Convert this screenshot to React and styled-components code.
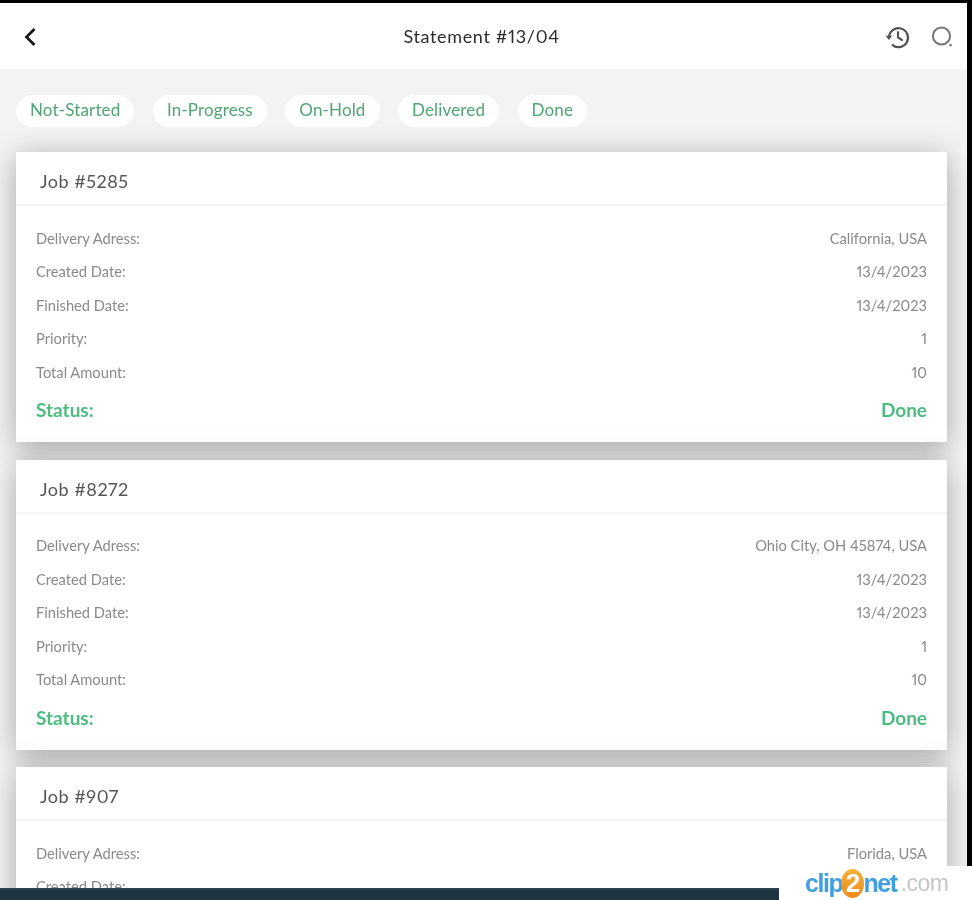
import React from "react";
import styled, { createGlobalStyle } from "styled-components";

const FILTERS = ["Not-Started", "In-Progress", "On-Hold", "Delivered", "Done"];

const fullDetails = (address) => [
    ["Delivery Adress:", address],
    ["Created Date:", "13/4/2023"],
    ["Finished Date:", "13/4/2023"],
    ["Priority:", "1"],
    ["Total Amount:", "10"],
];

// the last card runs off the bottom of the capture, only two rows of it show
const JOBS = [
    { id: 5285, details: fullDetails("California, USA"), status: "Done" },
    { id: 8272, details: fullDetails("Ohio City, OH 45874, USA"), status: "Done" },
    {
        id: 907,
        details: [
            ["Delivery Adress:", "Florida, USA"],
            ["Created Date:", ""],
        ],
    },
];

const GlobalStyle = createGlobalStyle`
    html, body {
        margin: 0;
        height: 900px;
        overflow: hidden;
        background: #000;
    }

    body {
        font-family: "Lato", "Noto Sans", sans-serif;
        font-variant-numeric: proportional-nums;
    }
`;

const Screen = styled.div`
    box-sizing: border-box;
    width: 967px;
    height: 885px;
    margin-top: 3px;
    overflow: hidden;
    background: #f3f3f3;
    filter: blur(0.6px);
`;

const Header = styled.header`
    box-sizing: border-box;
    height: 66px;
    display: flex;
    align-items: center;
    justify-content: space-between;
    padding: 2px 11px 0 16px;
    background: #fff;
`;

const IconButton = styled.div`
    width: 28px;
    height: 28px;
    display: flex;
`;

const Title = styled.h1`
    flex: 1;
    margin: 0 0 2px;
    padding-left: 36px;
    text-align: center;
    font-size: 18px;
    font-weight: 400;
    letter-spacing: 0.65px;
    color: #2c2c2c;
`;

const Actions = styled.div`
    display: flex;
    gap: 17px;
`;

const Filters = styled.div`
    display: flex;
    gap: 18.5px;
    padding: 26px 0 25px 16px;
`;

const Chip = styled.div`
    box-sizing: border-box;
    height: 32px;
    display: flex;
    align-items: center;
    padding: 0 14px 3px;
    border-radius: 16px;
    background: #fff;
    font-size: 17px;
    letter-spacing: 0.15px;
    color: #4fa573;
`;

const List = styled.div`
    display: flex;
    flex-direction: column;
    gap: 17.5px;
    padding: 0 20px 0 16px;
`;

const Card = styled.section`
    flex: none;
    background: #fff;
    box-shadow: 0 10px 26px rgba(0, 0, 0, 0.18), 0 0 30px rgba(0, 0, 0, 0.15);
`;

const CardTitle = styled.div`
    box-sizing: border-box;
    height: 54px;
    display: flex;
    align-items: center;
    padding: 6px 24px 0;
    border-bottom: 2px solid #f4f4f4;
    font-size: 18px;
    letter-spacing: 0.5px;
    color: #555;
`;

const CardBody = styled.div`
    box-sizing: border-box;
    height: 236px;
    display: flex;
    flex-direction: column;
    padding: 15px 20px 0;
`;

const DetailRow = styled.div`
    flex: none;
    height: 33.5px;
    display: flex;
    align-items: center;
    justify-content: space-between;
    font-size: 14.7px;
    color: #8a8a8a;
`;

const StatusRow = styled(DetailRow)`
    height: 42px;
    font-size: 19px;
    font-weight: 700;
    color: #4cbd80;
`;

const Taskbar = styled.div`
    position: fixed;
    left: 0;
    bottom: 0;
    width: 779px;
    height: 12px;
    background: linear-gradient(#2c4350, #1e3440 30%);
`;

const Watermark = styled.div`
    position: fixed;
    right: 0;
    bottom: 0;
    box-sizing: border-box;
    width: 193px;
    height: 34px;
    display: flex;
    align-items: center;
    padding-left: 26px;
    background: #fff;
    font-family: "Liberation Sans", sans-serif;
    font-size: 25px;
    filter: blur(0.6px);
`;

const LogoBlue = styled.span`
    font-weight: 700;
    letter-spacing: -1.4px;
    color: #3f9fe0;
`;

const LogoTwo = styled.span`
    width: 23px;
    height: 29px;
    margin: 0 -1px 0 -1px;
    display: flex;
    align-items: center;
    justify-content: center;
    border-radius: 50%;
    background: linear-gradient(#f5b23a, #ee8a1a);
    font-weight: 700;
    font-size: 26px;
    color: #fff;
`;

const LogoGrey = styled.span`
    margin-left: 4px;
    font-size: 23px;
    letter-spacing: -0.6px;
    color: #c3c7ca;
`;

const BackIcon = () => (
    <svg width="28" height="28" viewBox="0 0 28 28" fill="none">
        <path
            d="M17.5 7 L10.5 14 L17.5 21"
            stroke="#15181c"
            strokeWidth="2.8"
            strokeLinecap="square"
        />
    </svg>
);

const HistoryIcon = () => (
    <svg width="28" height="28" viewBox="0 0 28 28" fill="none">
        <path d="M6 14.5 A9.5 9.5 0 1 1 9 21.6" stroke="#4f5254" strokeWidth="2.2" />
        <path d="M2.6 12.8 H9.2 L5.9 17 Z" fill="#4f5254" />
        <path
            d="M15 9 V14.5 L19 17"
            stroke="#4f5254"
            strokeWidth="2.1"
            strokeLinecap="round"
        />
    </svg>
);

const SearchIcon = () => (
    <svg width="28" height="28" viewBox="0 0 28 28" fill="none">
        <circle cx="13.5" cy="13" r="8.6" stroke="#737576" strokeWidth="2" />
        <path d="M21.6 21.2 L23.4 23" stroke="#737576" strokeWidth="2.2" />
    </svg>
);

const JobCard = ({ job }) => (
    <Card>
        <CardTitle>Job #{job.id}</CardTitle>
        <CardBody>
            {job.details.map(([label, value]) => (
                <DetailRow key={label}>
                    <span>{label}</span>
                    <span>{value}</span>
                </DetailRow>
            ))}
            {job.status && (
                <StatusRow>
                    <span>Status:</span>
                    <span>{job.status}</span>
                </StatusRow>
            )}
        </CardBody>
    </Card>
);

const App = () => (
    <>
        <GlobalStyle />
        <Screen>
            <Header>
                <IconButton>
                    <BackIcon />
                </IconButton>
                <Title>Statement #13/04</Title>
                <Actions>
                    <IconButton>
                        <HistoryIcon />
                    </IconButton>
                    <IconButton>
                        <SearchIcon />
                    </IconButton>
                </Actions>
            </Header>
            <Filters>
                {FILTERS.map((name) => (
                    <Chip key={name}>{name}</Chip>
                ))}
            </Filters>
            <List>
                {JOBS.map((job) => (
                    <JobCard key={job.id} job={job} />
                ))}
            </List>
        </Screen>
        <Taskbar />
        <Watermark>
            <LogoBlue>clip</LogoBlue>
            <LogoTwo>2</LogoTwo>
            <LogoBlue>net</LogoBlue>
            <LogoGrey>.com</LogoGrey>
        </Watermark>
    </>
);

export default App;
